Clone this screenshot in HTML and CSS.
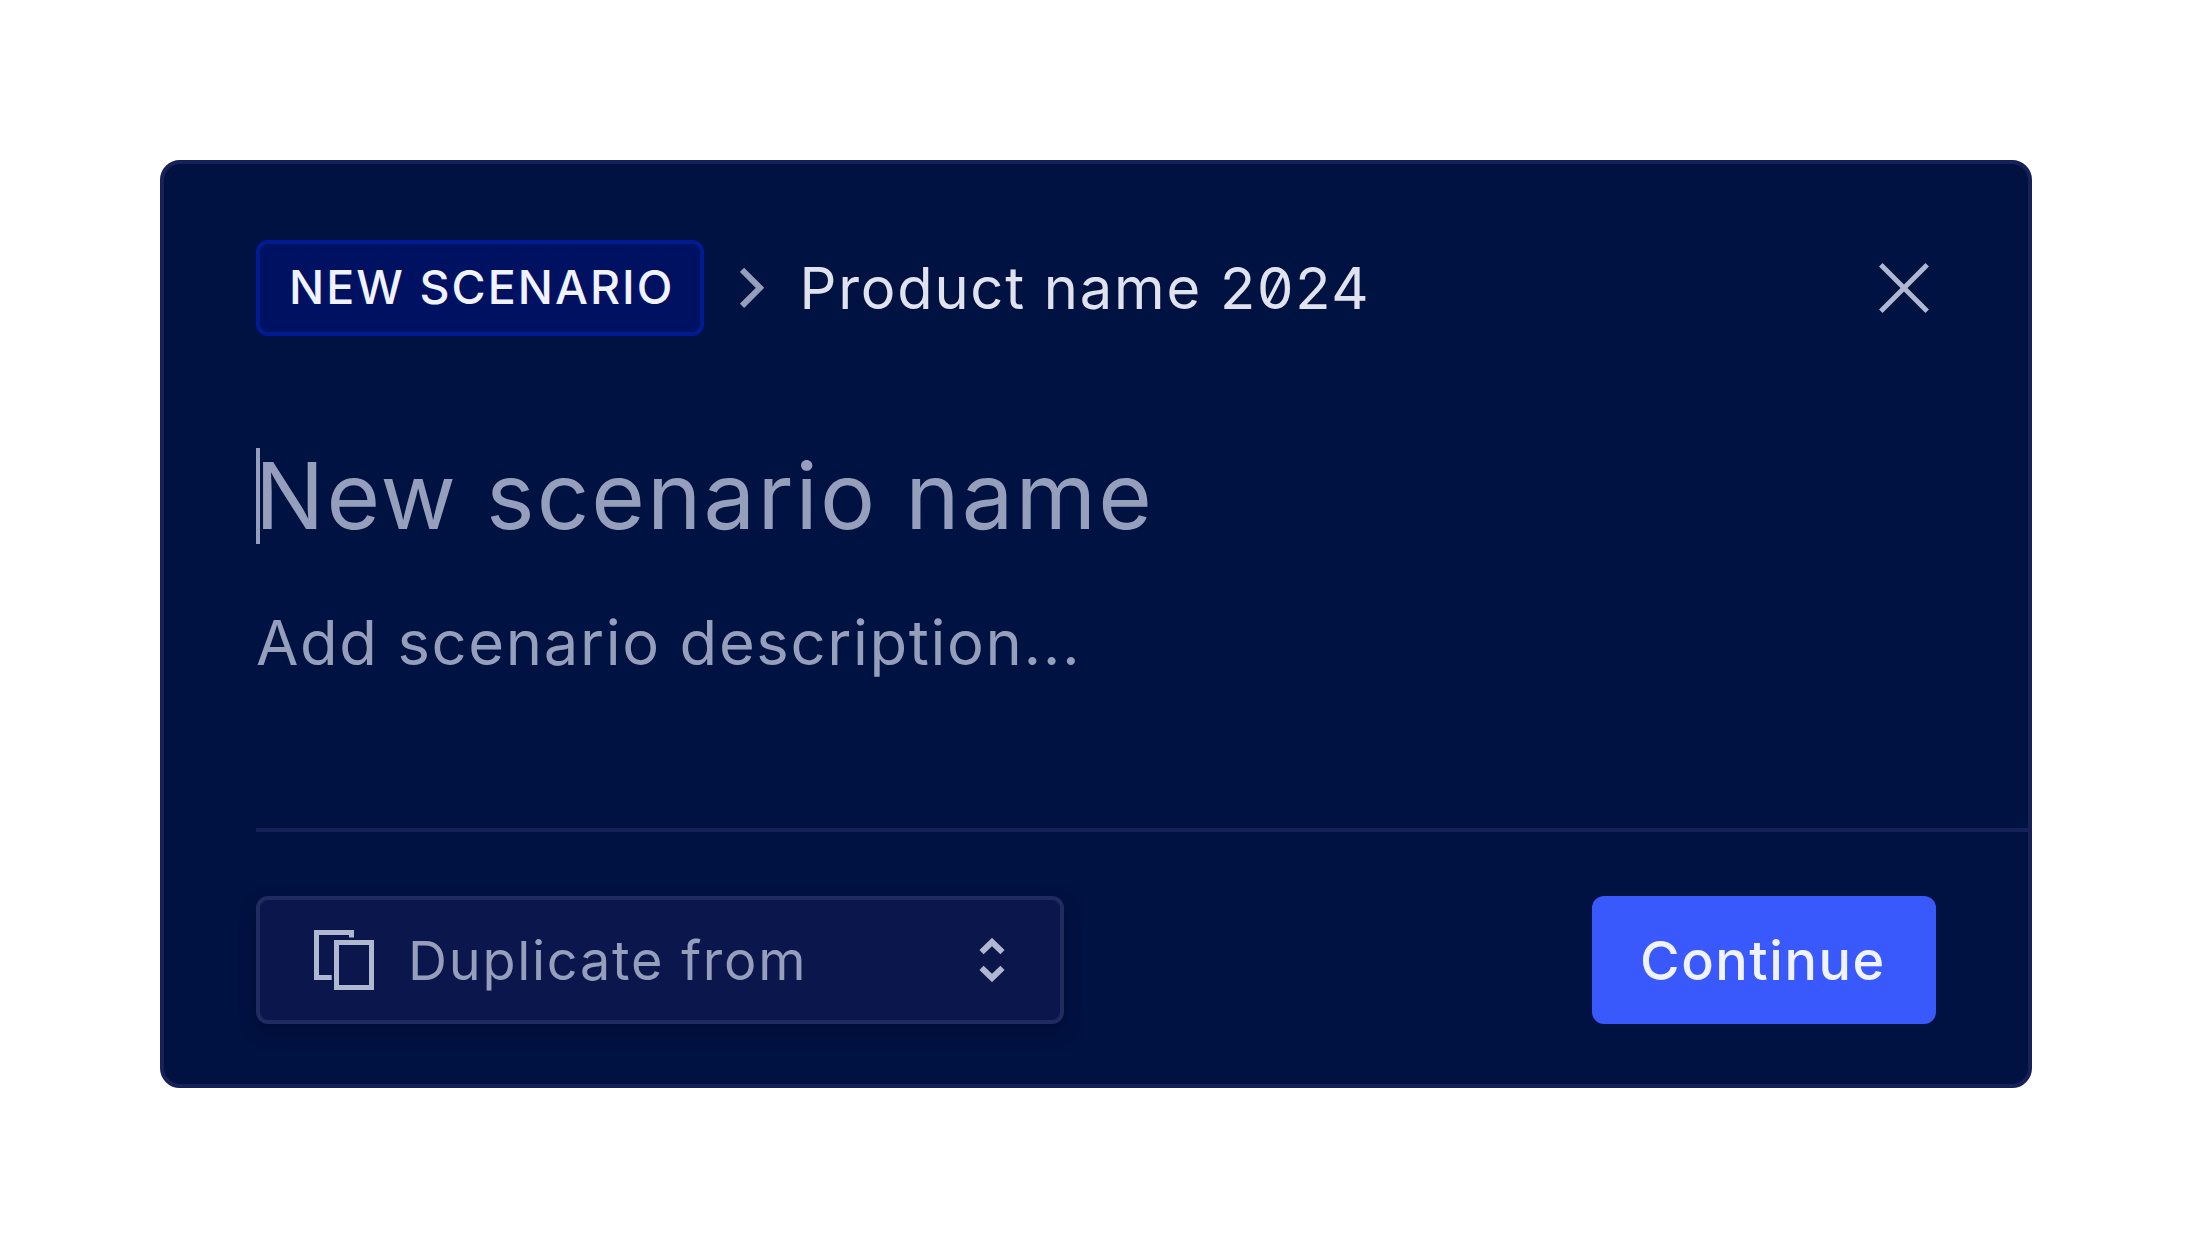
FILE: index.html
```
<!DOCTYPE html>
<html lang="en">
<head>
  <meta charset="utf-8">
  <title>New scenario</title>
  <link rel="stylesheet" href="styles.css">
</head>
<body>
  <main class="dialog">
    <header class="dialog-header">
      <span class="badge">NEW SCENARIO</span>
      <svg class="chevron" width="24" height="42" viewBox="0 0 24 42" aria-hidden="true"><path d="M2 2.8 20 20.8 2 38.8"/></svg>
      <span class="product">Product name 2024</span>
      <button class="close" aria-label="Close">
        <svg width="50" height="50" viewBox="0 0 50 50"><path d="M1.8 1.8 48.2 48.2M48.2 1.8 1.8 48.2"/></svg>
      </button>
    </header>
    <section class="fields">
      <div class="name-field"><span class="caret"></span>New scenario name</div>
      <div class="description-field">Add scenario description...</div>
    </section>
    <footer class="dialog-footer">
      <div class="select">
        <svg class="copy-icon" width="60" height="60" viewBox="0 0 60 60" aria-hidden="true"><path d="M37.5 7.5V2.5H2.5V47.5H17.7M22.5 12.5H57.5V57.5H22.5Z"/></svg>
        <span class="select-label">Duplicate from</span>
        <svg class="sort-icon" width="26" height="44" viewBox="0 0 26 44" aria-hidden="true"><path d="M2.5 14.2 13 4 23.5 14.2M2.5 29.8 13 40 23.5 29.8"/></svg>
      </div>
      <button class="continue">Continue</button>
    </footer>
  </main>
</body>
</html>
```
FILE: styles.css
```
* {
  box-sizing: border-box;
}

body {
  margin: 0;
  padding: 160px;
  height: 1248px;
  background: #fff;
  font-family: Inter, "Liberation Sans", sans-serif;
  font-feature-settings: "zero";
  white-space: nowrap;
}

svg {
  display: block;
  flex: none;
  fill: none;
}

button {
  border: 0;
  padding: 0;
  background: none;
  font: inherit;
}

.dialog {
  display: flex;
  flex-direction: column;
  height: 928px;
  padding: 76px 0 0 92px;
  border: 4px solid #152158;
  border-radius: 20px;
  background: #001242;
}

.dialog-header {
  display: flex;
  align-items: center;
  height: 96px;
  padding-right: 99px;
}

.badge {
  width: 448px;
  height: 96px;
  padding-left: 29px;
  border: 4px solid #001b92;
  border-radius: 12px;
  background: #001162;
  color: #f0f3ff;
  font-size: 46.5px;
  font-weight: 500;
  line-height: 87px;
  letter-spacing: 2.04px;
}

.chevron {
  margin: 0 0 0 36px;
  stroke: #959fbb;
  stroke-width: 6;
}

.product {
  margin: 0 0 0 35.5px;
  color: #e0e3ee;
  font-size: 57.8px;
  letter-spacing: 1.78px;
}

.close {
  margin-left: auto;
  stroke: #b0b7d0;
  stroke-width: 5;
}

.fields {
  margin-top: 112px;
  color: #959fbb;
}

.name-field {
  position: relative;
  height: 96px;
  margin-left: -1px;
  font-size: 92px;
  line-height: 95px;
  letter-spacing: 2.13px;
}

.caret {
  position: absolute;
  left: 1px;
  top: 0;
  width: 4px;
  height: 96px;
  background: #959fbb;
}

.description-field {
  margin: 59px 0 0 0;
  font-size: 61.5px;
  line-height: 80px;
  letter-spacing: 1.62px;
}

.dialog-footer {
  display: flex;
  justify-content: space-between;
  margin-top: auto;
  padding: 64px 92px 60px 0;
  border-top: 4px solid #152158;
}

.select {
  display: flex;
  align-items: center;
  width: 808px;
  height: 128px;
  padding: 0 55px 0 54px;
  border: 4px solid #202b60;
  border-radius: 12px;
  background: #0a164c;
  box-shadow: 0 8px 16px rgba(0, 6, 40, 0.45);
}

.copy-icon {
  stroke: #b0b7d0;
  stroke-width: 5;
}

.select-label {
  margin-left: 34px;
  color: #959fbb;
  font-size: 54px;
  letter-spacing: 1.75px;
}

.sort-icon {
  margin-left: auto;
  stroke: #b0b7d0;
  stroke-width: 6;
}

.continue {
  width: 344px;
  height: 128px;
  padding-left: 48px;
  border-radius: 12px;
  background: #3959fc;
  color: #f0f3ff;
  font-size: 54px;
  font-weight: 500;
  letter-spacing: 1.54px;
  text-align: left;
}
```
